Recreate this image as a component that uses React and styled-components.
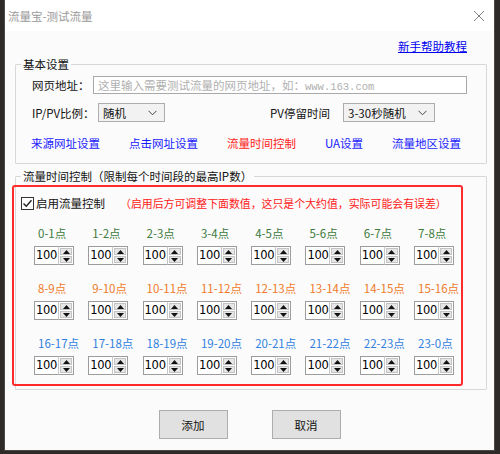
import React from 'react'
import styled, { createGlobalStyle } from 'styled-components'

const GlobalStyle = createGlobalStyle`
  html, body {
    margin: 0;
    padding: 0;
    height: 454px;
    overflow: hidden;
    background: #2d2a28;
  }
  body {
    font-family: "Noto Sans CJK SC", "Liberation Sans", sans-serif;
    font-size: 11.5px;
    color: #000;
  }
`

const hours = [
  ['0-1点', '1-2点', '2-3点', '3-4点', '4-5点', '5-6点', '6-7点', '7-8点'],
  ['8-9点', '9-10点', '10-11点', '11-12点', '12-13点', '13-14点', '14-15点', '15-16点'],
  ['16-17点', '17-18点', '18-19点', '19-20点', '20-21点', '21-22点', '22-23点', '23-0点'],
]
const rowColors = ['#3b7a3b', '#f07a2a', '#2f80e0']

const CloseIcon = () => (
  <svg width="12" height="12" viewBox="0 0 12 12">
    <path d="M1 1 L11 11 M11 1 L1 11" stroke="#808080" strokeWidth="1" fill="none" />
  </svg>
)

const Chevron = () => (
  <svg width="9" height="6" viewBox="0 0 9 6">
    <path d="M0.5 0.8 L4.5 4.8 L8.5 0.8" stroke="#444" strokeWidth="1" fill="none" />
  </svg>
)

const Spinner = () => (
  <SpinBox>
    <SpinValue>100</SpinValue>
    <SpinButtons>
      <SpinBtn>
        <svg width="7" height="4" viewBox="0 0 7 4"><path d="M0 4 L3.5 0 L7 4 Z" fill="#111" /></svg>
      </SpinBtn>
      <SpinBtn>
        <svg width="7" height="4" viewBox="0 0 7 4"><path d="M0 0 L3.5 4 L7 0 Z" fill="#111" /></svg>
      </SpinBtn>
    </SpinButtons>
  </SpinBox>
)

export default function App() {
  return (
    <>
      <GlobalStyle />
      <Window>
        <TitleBar>
          <Title>流量宝-测试流量</Title>
          <CloseIcon />
        </TitleBar>

        <HelpRow>
          <HelpLink>新手帮助教程</HelpLink>
        </HelpRow>

        <Group>
          <Legend>基本设置</Legend>
          <FormRow>
            <FieldLabel width={61}>网页地址：</FieldLabel>
            <UrlInput>这里输入需要测试流量的网页地址，如：<Mono>www.163.com</Mono></UrlInput>
          </FormRow>
          <FormRow top={9}>
            <FieldLabel width={66}>IP/PV比例：</FieldLabel>
            <Select width={67}>随机<Chevron /></Select>
            <FieldLabel width={73} style={{ marginLeft: 105 }}>PV停留时间</FieldLabel>
            <Select width={92}>3-30秒随机<Chevron /></Select>
          </FormRow>
          <LinkRow>
            <NavLink>来源网址设置</NavLink>
            <NavLink>点击网址设置</NavLink>
            <NavLink active>流量时间控制</NavLink>
            <NavLink>UA设置</NavLink>
            <NavLink>流量地区设置</NavLink>
          </LinkRow>
        </Group>

        <Group top={5} bottom={3}>
          <Legend>流量时间控制（限制每个时间段的最高IP数）</Legend>
          <RedBox>
            <CheckRow>
              <CheckBox>
                <svg width="11" height="11" viewBox="0 0 11 11">
                  <path d="M1.5 5.5 L4.3 8.3 L9.5 2.3" stroke="#222" strokeWidth="1.4" fill="none" />
                </svg>
              </CheckBox>
              <span>启用流量控制</span>
              <Note>（启用后方可调整下面数值，这只是个大约值，实际可能会有误差）</Note>
            </CheckRow>
            <HourGrid>
              {hours.map((row, r) =>
                row.map((h) => (
                  <Cell key={h}>
                    <HourLabel color={rowColors[r]}>{h}</HourLabel>
                    <Spinner />
                  </Cell>
                ))
              )}
            </HourGrid>
          </RedBox>
        </Group>

        <ButtonRow>
          <Button>添加</Button>
          <Button>取消</Button>
        </ButtonRow>
      </Window>
    </>
  )
}

const Window = styled.div`
  width: 489px;
  height: 450px;
  margin-left: 5px;
  background: #fbfbfb;
  display: flex;
  flex-direction: column;
  box-shadow: 0 0 0 1px #4b4845;
`

const TitleBar = styled.div`
  height: 31px;
  background: #fff;
  display: flex;
  align-items: center;
  justify-content: space-between;
  padding: 0 9px 0 3px;
  flex-shrink: 0;
`

const Title = styled.span`
  color: #9a9a9a;
  font-size: 11.5px;
  line-height: 14px;
`

const HelpRow = styled.div`
  height: 26px;
  display: flex;
  justify-content: flex-end;
  padding-right: 27px;
  flex-shrink: 0;
`

const HelpLink = styled.a`
  margin-top: 8px;
  line-height: 14px;
  color: #0000ee;
  text-decoration: underline;
`

const Group = styled.fieldset`
  margin: ${(p) => p.top || 0}px 7px 0 10px;
  padding: 0 0 ${(p) => (p.bottom === undefined ? 13 : p.bottom)}px 0;
  border: 1px solid #d8d8d8;
  border-radius: 1px;
  min-width: 0;
  flex-shrink: 0;
`

const Legend = styled.legend`
  margin-left: 5px;
  padding: 0 2px;
  line-height: 14px;
  color: #111;
`

const FormRow = styled.div`
  display: flex;
  align-items: center;
  margin-top: ${(p) => p.top || 4}px;
  padding-left: 16px;
  height: 19px;
`

const FieldLabel = styled.span`
  width: ${(p) => p.width}px;
  flex-shrink: 0;
  line-height: 14px;
  color: #111;
`

const UrlInput = styled.div`
  width: 374px;
  height: 18px;
  box-sizing: border-box;
  border: 1px solid #a9a9a9;
  background: #fff;
  color: #b0b0b0;
  padding-left: 4px;
  line-height: 16px;
  white-space: nowrap;
  overflow: hidden;
`

const Mono = styled.span`
  font-family: "Liberation Mono", monospace;
  font-size: 10.5px;
`

const Select = styled.div`
  width: ${(p) => p.width}px;
  height: 19px;
  box-sizing: border-box;
  border: 1px solid #adadad;
  background: #f2f2f2;
  display: flex;
  align-items: center;
  justify-content: space-between;
  padding: 0 7px 0 4px;
  line-height: 14px;
  color: #111;
`

const LinkRow = styled.div`
  display: flex;
  gap: 29px;
  margin-top: 14px;
  padding-left: 15px;
  line-height: 14px;
`

const NavLink = styled.a`
  color: ${(p) => (p.active ? '#ff1a1a' : '#1a1aff')};
  cursor: pointer;
`

const RedBox = styled.div`
  margin: 2px 0 0 -4px;
  width: 451px;
  height: 201px;
  box-sizing: border-box;
  border: 2px solid #ff2a2a;
  border-radius: 3px;
  padding: 9px 0 0 0;
`

const CheckRow = styled.div`
  display: flex;
  align-items: center;
  height: 14px;
  padding-left: 7px;
  line-height: 14px;
  color: #111;
`

const CheckBox = styled.span`
  width: 13px;
  height: 13px;
  box-sizing: border-box;
  border: 1px solid #333;
  background: #fff;
  display: flex;
  align-items: center;
  justify-content: center;
  margin-right: 2px;
`

const Note = styled.span`
  margin-left: 15px;
  color: #ff2020;
  font-size: 10.9px;
  white-space: nowrap;
`

const HourGrid = styled.div`
  display: grid;
  grid-template-columns: repeat(8, 54.3px);
  row-gap: 16px;
  margin-top: 16px;
  padding-left: 20px;
`

const Cell = styled.div`
  display: flex;
  flex-direction: column;
  align-items: flex-start;
  gap: 6px;
`

const HourLabel = styled.span`
  color: ${(p) => p.color};
  line-height: 14px;
  padding-left: 4px;
  white-space: nowrap;
`

const SpinBox = styled.div`
  display: flex;
  width: 40px;
  height: 19px;
`

const SpinValue = styled.div`
  width: 24px;
  box-sizing: border-box;
  border: 1px solid #9c9c9c;
  border-right: none;
  background: #fff;
  font-family: "DejaVu Sans", "Liberation Sans", sans-serif;
  font-size: 11.5px;
  letter-spacing: -0.3px;
  line-height: 17px;
  padding-left: 1px;
  color: #000;
`

const SpinButtons = styled.div`
  width: 16px;
  display: flex;
  flex-direction: column;
  box-sizing: border-box;
  border: 1px solid #9c9c9c;
  border-left: 1px solid #c8c8c8;
  background: #fff;
  padding: 1px;
  gap: 1px;
`

const SpinBtn = styled.div`
  flex: 1;
  background: #e6e6e6;
  border: 1px solid #c4c4c4;
  display: flex;
  align-items: center;
  justify-content: center;
`

const ButtonRow = styled.div`
  display: flex;
  justify-content: center;
  gap: 44px;
  margin-top: 20px;
`

const Button = styled.button`
  width: 69px;
  height: 29px;
  background: #e1e1e1;
  border: 1px solid #adadad;
  font-family: "Noto Sans CJK SC", sans-serif;
  font-size: 11.5px;
  color: #111;
  padding: 0;
`
